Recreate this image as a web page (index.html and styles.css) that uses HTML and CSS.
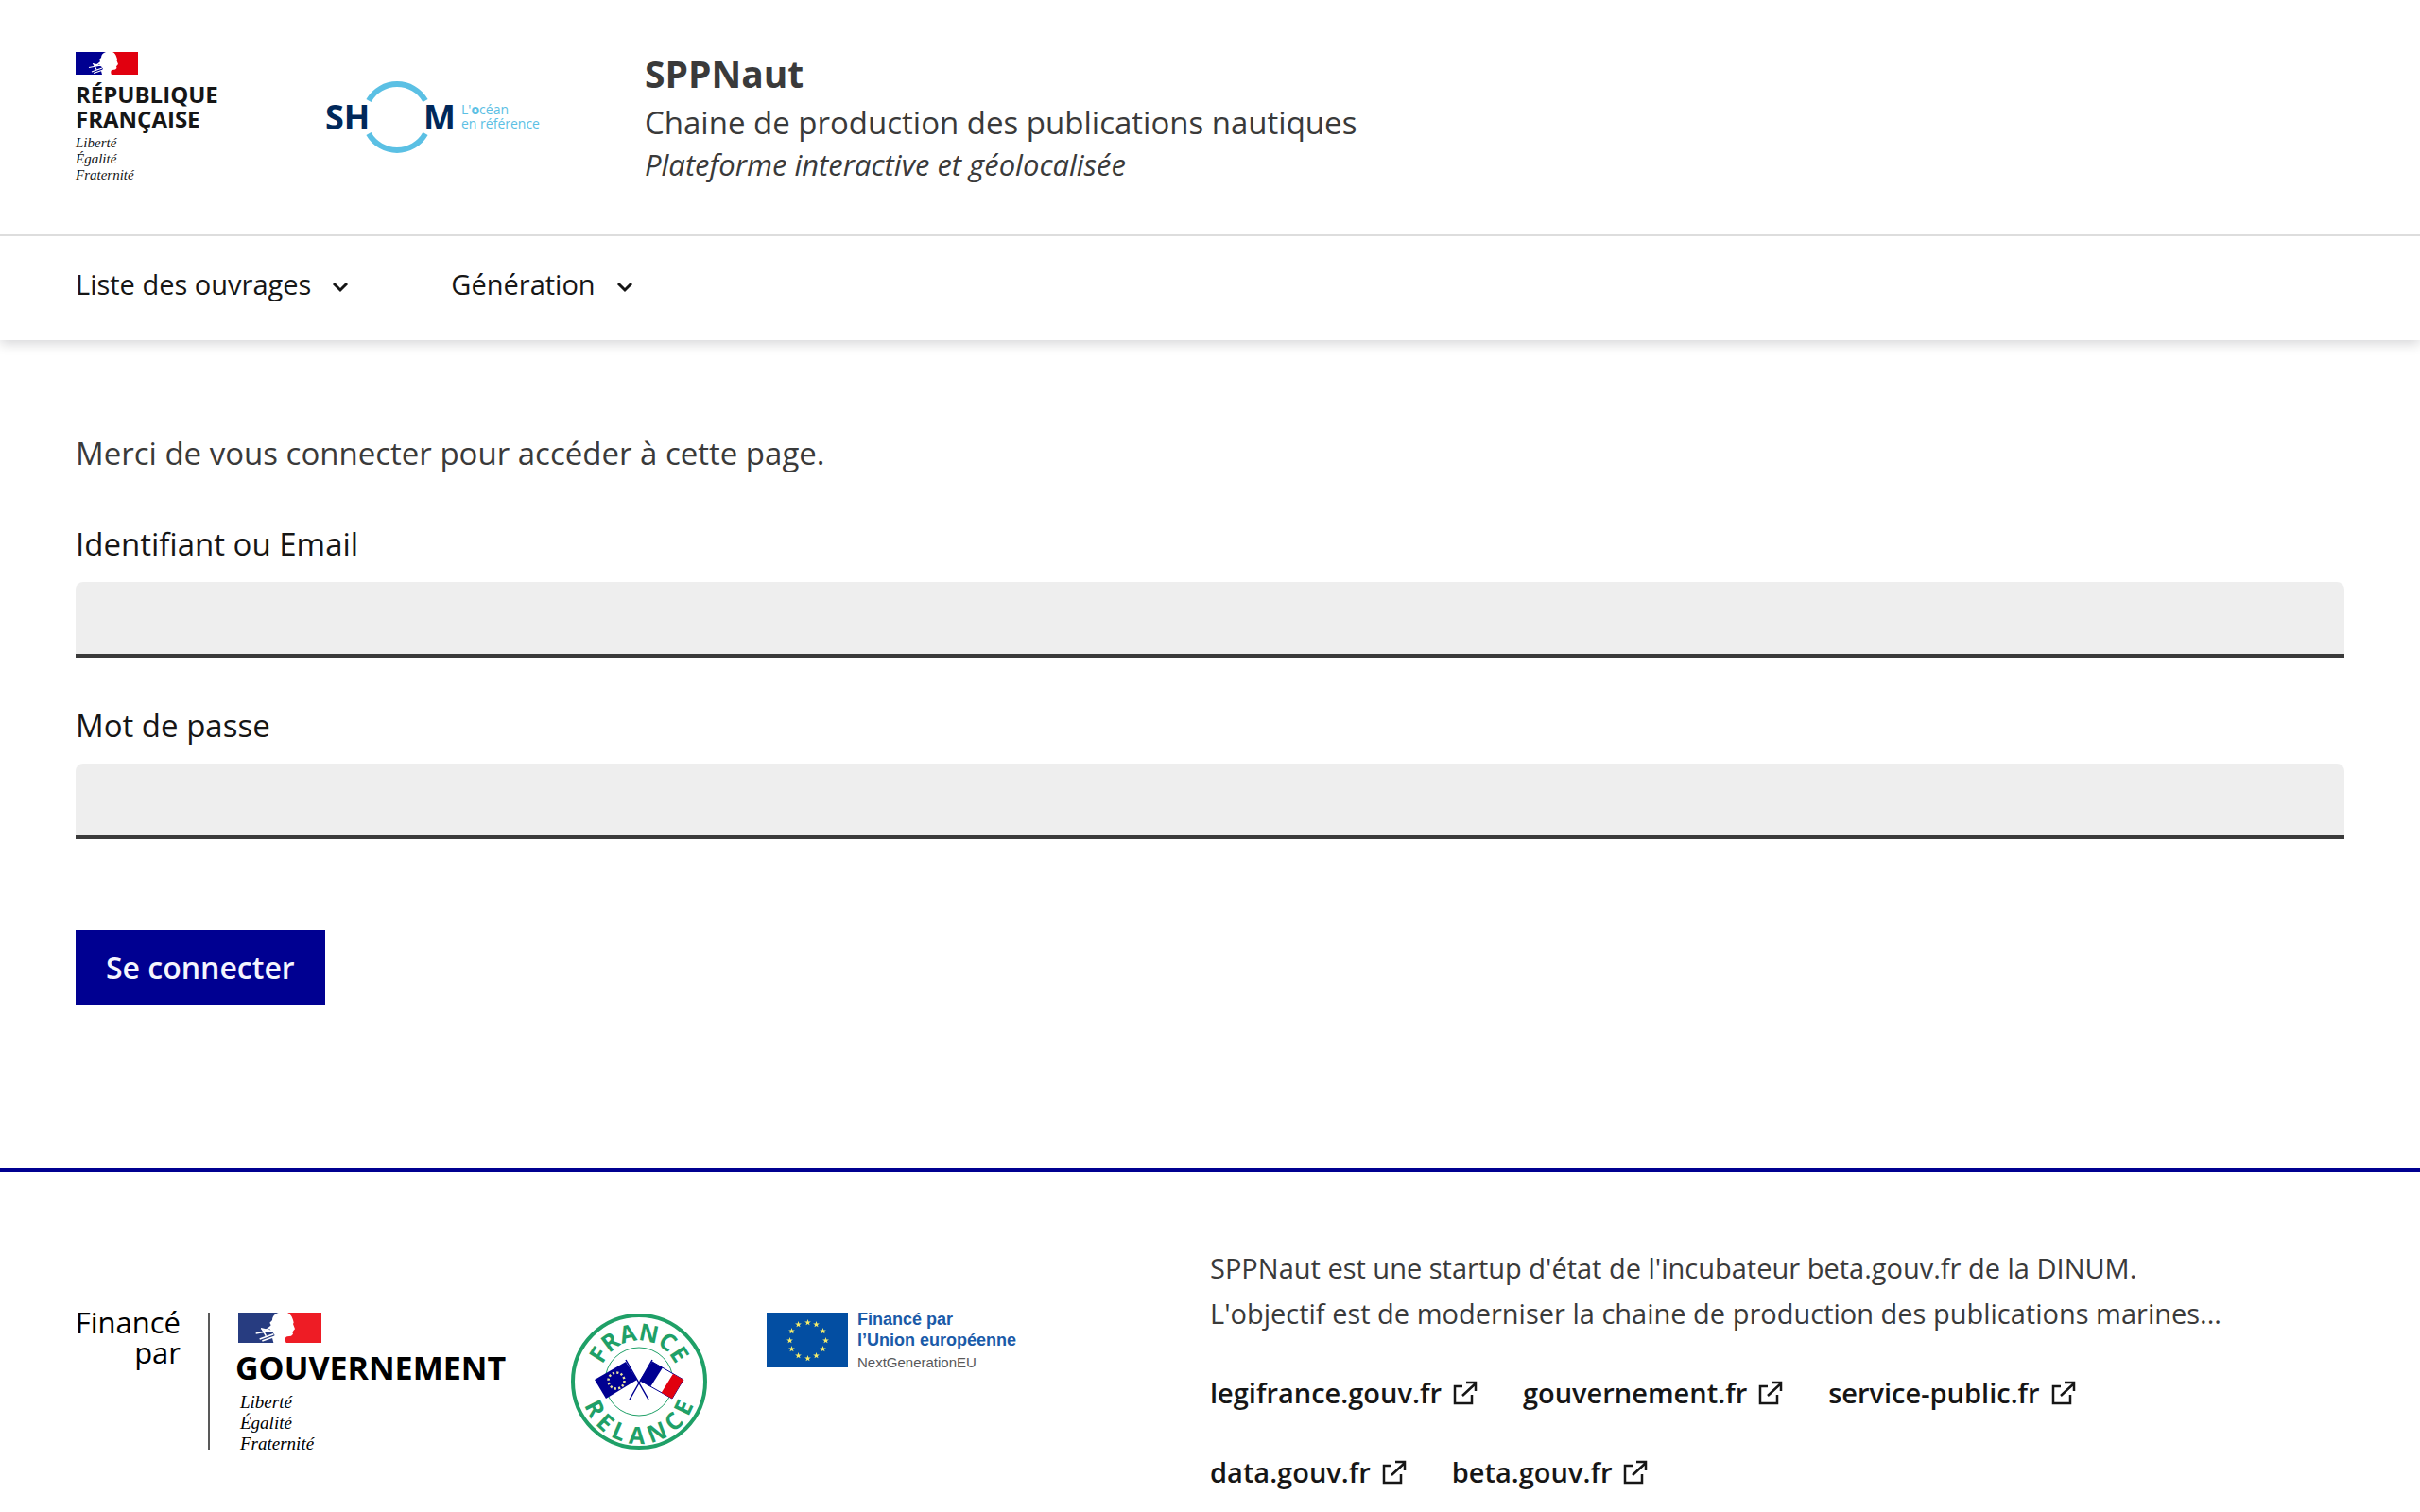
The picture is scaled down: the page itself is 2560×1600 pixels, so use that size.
FILE: index.html
```html
<!DOCTYPE html>
<html lang="fr">
<head>
<meta charset="utf-8">
<meta name="viewport" content="width=device-width, initial-scale=1">
<title>SPPNaut</title>
<link rel="stylesheet" href="styles.css">
</head>
<body>
<svg class="sprite" aria-hidden="true">
  <symbol id="flag" viewBox="0 0 66 24">
    <rect width="66" height="24" fill="#fff"/>
    <path class="flag-blue" d="M0 0H32C29 1 27 3 27 6L25 8 26 10 24 12 27 15 29 18 27 20 28 24H0z"/>
    <path class="flag-red" d="M39 0H66V24H38C37 22 37 19 39 19L42 18.500 43.500 17 43 15.500 44 14 45 13 43.500 9 44 8C43.500 5 42 1 39 0z"/>
    <path d="M28 15L18 12.500M27 14L14 16.500M19 13L22 18.500M28 17L17 21M29 19L19 22.500M25 12L20 15" fill="none" stroke="#fff" stroke-width="1.200"/>
  </symbol>
  <symbol id="chevron" viewBox="0 0 18 12"><path d="M2 2l7 7 7-7" fill="none" stroke="#161616" stroke-width="3"/></symbol>
  <symbol id="external" viewBox="0 0 26 26"><path d="M10 6H2v18h18v-9M10 16L24 3M14 2h10v9" fill="none" stroke="#161616" stroke-width="2.500"/></symbol>
  <symbol id="star" viewBox="-5 -5 10 10"><path d="M0-5L1.200-1.600 4.800-1.500 1.900.6 2.900 4 0 2 -2.900 4-1.900.6-4.800-1.500-1.200-1.600z"/></symbol>
</svg>

<header class="header">
  <div class="header-brand">
    <div class="state">
      <svg class="state-flag flag-bright" aria-hidden="true"><use href="#flag"/></svg>
      <p class="state-name">RÉPUBLIQUE<br>FRANÇAISE</p>
      <p class="state-motto">Liberté<br>Égalité<br>Fraternité</p>
    </div>
    <svg class="shom" viewBox="0 0 226 76" role="img" aria-label="Shom">
      <path d="M46 20.500A34.500 34.500 0 0 1 106 20.500M46 55.500A34.500 34.500 0 0 0 106 55.500" fill="none" stroke="#5bc0e4" stroke-width="6"/>
      <text class="shom-name" x="0" y="51">SH</text>
      <text class="shom-name" x="104" y="51">M</text>
      <text class="shom-tag" x="144" y="35">L'<tspan class="strong">o</tspan>céan</text>
      <text class="shom-tag" x="144" y="50">en référence</text>
    </svg>
    <div class="service">
      <p class="service-title">SPPNaut</p>
      <p class="service-line">Chaine de production des publications nautiques</p>
      <p class="service-note">Plateforme interactive et géolocalisée</p>
    </div>
  </div>
  <nav class="nav" aria-label="Menu principal">
    <button class="nav-item" type="button">Liste des ouvrages<svg class="chevron" aria-hidden="true"><use href="#chevron"/></svg></button>
    <button class="nav-item" type="button">Génération<svg class="chevron" aria-hidden="true"><use href="#chevron"/></svg></button>
  </nav>
</header>

<main class="main">
  <p class="intro">Merci de vous connecter pour accéder à cette page.</p>
  <form class="form">
    <div class="field">
      <label for="login">Identifiant ou Email</label>
      <input id="login" type="text">
    </div>
    <div class="field">
      <label for="password">Mot de passe</label>
      <input id="password" type="password">
    </div>
    <button class="submit" type="submit">Se connecter</button>
  </form>
</main>

<footer class="footer">
  <div class="partners">
    <svg class="partner-gov flag-soft" viewBox="0 0 462 148" role="img" aria-label="Financé par le Gouvernement">
      <text class="gov-funded" x="111" y="23">Financé</text>
      <text class="gov-funded" x="111" y="55">par</text>
      <path d="M141 1V146" stroke="#222" stroke-width="1.500"/>
      <use href="#flag" x="172" y="1" width="88" height="32"/>
      <text class="gov-name" x="169" y="72">GOUVERNEMENT</text>
      <text class="gov-motto" x="174" y="102">Liberté</text>
      <text class="gov-motto" x="174" y="124">Égalité</text>
      <text class="gov-motto" x="174" y="146">Fraternité</text>
    </svg>
    <svg class="partner-relance" viewBox="0 0 148 148" role="img" aria-label="France Relance">
      <defs>
        <path id="arc-top" d="M34.500 87A42 42 0 1 1 113.500 87"/>
        <path id="arc-bottom" d="M13 79A61 61 0 0 0 135 79"/>
      </defs>
      <circle cx="74" cy="74" r="70" fill="#fff" stroke="#1fa067" stroke-width="4"/>
      <circle cx="74" cy="74" r="36" fill="none" stroke="#1fa067"/>
      <text class="relance-text"><textPath href="#arc-top" startOffset="50%">FRANCE</textPath></text>
      <text class="relance-text"><textPath href="#arc-bottom" startOffset="50%">R E L A N C E</textPath></text>
      <path d="M27 72L60 53 72 72 39 92z" fill="#000091"/>
      <circle cx="50" cy="73" r="8.500" fill="none" stroke="#e9e3a0" stroke-width="2.500" stroke-dasharray="2.200 2.250"/>
      <path d="M88 53L121 72 109 92 75 73z" fill="#fff" stroke="#000091"/>
      <path d="M88 53L99 59.300 86.300 79.300 75 73z" fill="#000091"/>
      <path d="M110 65.700L121 72 109 92 97.700 85.700z" fill="#e1000f"/>
      <path d="M60 51L84 93M88 51L64 93" stroke="#000091" stroke-width="1.500"/>
    </svg>
    <svg class="partner-eu" viewBox="0 0 270 148" role="img" aria-label="Financé par l'Union européenne, NextGenerationEU">
      <rect x="1" y="1" width="86" height="58" fill="#034ea2"/>
      <g fill="#f5ec6a">
        <use href="#star" x="41" y="8" width="7" height="7"/>
        <use href="#star" x="50" y="10" width="7" height="7"/>
        <use href="#star" x="57" y="17" width="7" height="7"/>
        <use href="#star" x="60" y="27" width="7" height="7"/>
        <use href="#star" x="57" y="36" width="7" height="7"/>
        <use href="#star" x="50" y="43" width="7" height="7"/>
        <use href="#star" x="41" y="46" width="7" height="7"/>
        <use href="#star" x="31" y="43" width="7" height="7"/>
        <use href="#star" x="24" y="36" width="7" height="7"/>
        <use href="#star" x="22" y="27" width="7" height="7"/>
        <use href="#star" x="24" y="17" width="7" height="7"/>
        <use href="#star" x="31" y="10" width="7" height="7"/>
      </g>
      <text class="eu-name" x="97" y="14">Financé par</text>
      <text class="eu-name" x="97" y="36">l’Union européenne</text>
      <text class="eu-plan" x="97" y="59">NextGenerationEU</text>
    </svg>
  </div>
  <div class="about">
    <p class="about-text">SPPNaut est une startup d'état de l'incubateur beta.gouv.fr de la DINUM.<br>L'objectif est de moderniser la chaine de production des publications marines...</p>
    <ul class="links">
      <li><a href="#">legifrance.gouv.fr<svg class="external" aria-hidden="true"><use href="#external"/></svg></a></li>
      <li><a href="#">gouvernement.fr<svg class="external" aria-hidden="true"><use href="#external"/></svg></a></li>
      <li><a href="#">service-public.fr<svg class="external" aria-hidden="true"><use href="#external"/></svg></a></li>
      <li><a href="#">data.gouv.fr<svg class="external" aria-hidden="true"><use href="#external"/></svg></a></li>
      <li><a href="#">beta.gouv.fr<svg class="external" aria-hidden="true"><use href="#external"/></svg></a></li>
    </ul>
  </div>
</footer>
</body>
</html>
```
FILE: styles.css
```css
* { box-sizing: border-box; margin: 0; padding: 0; }

body {
  font-family: "Open Sans", sans-serif;
  font-size: 33px;
  line-height: 48px;
  color: #3a3a3a;
  background: #fff;
}

.sprite { display: none; }

/* Header */
.header { box-shadow: 0 4px 12px rgba(0, 0, 18, 0.16); }
.header-brand {
  display: flex;
  align-items: center;
  gap: 112px;
  padding: 50px 80px;
}
.state { flex: none; width: 152px; color: #161616; }
.state-flag { display: block; width: 66px; height: 24px; margin-bottom: 8px; }
.state-name { font-size: 24px; line-height: 26px; font-weight: 700; margin-bottom: 4px; }
.state-motto { font: italic 15px/17px "Liberation Serif", serif; }
.flag-bright { --flag-blue: #000091; --flag-red: #e1000f; }
.flag-soft { --flag-blue: #273c80; --flag-red: #ee1c25; }
.flag-blue { fill: var(--flag-blue); }
.flag-red { fill: var(--flag-red); }

.shom { flex: none; width: 226px; height: 76px; overflow: visible; }
.shom-name { font-size: 36px; font-weight: 700; fill: #00285a; }
.shom-tag { font-size: 14px; fill: #5bc0e4; }
.strong { font-weight: 700; }

.service { padding: 4px 0; }
.service-title { font-size: 39px; font-weight: 700; margin-bottom: 4px; }
.service-note { font-size: 31px; line-height: 40px; font-style: italic; }

.nav {
  display: flex;
  gap: 108px;
  padding: 24px 80px 32px;
  border-top: 2px solid #ddd;
}
.nav-item {
  display: flex;
  align-items: center;
  gap: 22px;
  border: 0;
  background: none;
  font-family: inherit;
  font-size: 29px;
  line-height: 54px;
  color: #161616;
}
.chevron { width: 18px; height: 12px; margin-top: 6px; }

/* Login form */
.main { padding: 96px 80px 172px; }
.form { margin-top: 48px; }
.field { margin-bottom: 48px; }
.field label { display: block; margin-bottom: 16px; color: #161616; }
.field input {
  display: block;
  width: 100%;
  height: 80px;
  padding: 0 32px;
  border: 0;
  border-radius: 8px 8px 0 0;
  background: #eee;
  box-shadow: inset 0 -4px 0 #3a3a3a;
  font: inherit;
}
.submit {
  display: block;
  margin-top: 96px;
  padding: 16px 32px;
  border: 0;
  background: #000091;
  color: #f5f5fe;
  font-family: inherit;
  font-size: 32px;
  font-weight: 600;
  line-height: 48px;
}

/* Footer */
.footer {
  display: grid;
  grid-template-columns: 1fr 1fr;
  padding: 78px 80px 12px;
  border-top: 4px solid #000091;
}
.partners { display: flex; align-items: flex-start; gap: 60px; margin-top: 70px; }
.partners svg { flex: none; height: 148px; overflow: visible; }
.partner-gov { width: 462px; }
.partner-relance { width: 148px; }
.partner-eu { width: 270px; }
.gov-funded { font-size: 31px; text-anchor: end; fill: #000; }
.gov-name { font-size: 34px; font-weight: 700; fill: #000; }
.gov-motto { font: italic 19px "Liberation Serif", serif; fill: #000; }
.relance-text { font-size: 25px; font-weight: 700; text-anchor: middle; fill: #1fa067; }
.eu-name { font: 700 18px "Liberation Sans", sans-serif; fill: #1a5aa8; }
.eu-plan { font: 15px "Liberation Sans", sans-serif; fill: #58585a; }

.about-text { font-size: 29px; }
.links {
  display: flex;
  flex-wrap: wrap;
  gap: 36px 48px;
  margin-top: 36px;
  padding-right: 80px;
  list-style: none;
}
.links a {
  display: flex;
  align-items: center;
  gap: 12px;
  color: #161616;
  font-size: 29px;
  font-weight: 600;
  text-decoration: none;
}
.external { width: 26px; height: 26px; }
```
